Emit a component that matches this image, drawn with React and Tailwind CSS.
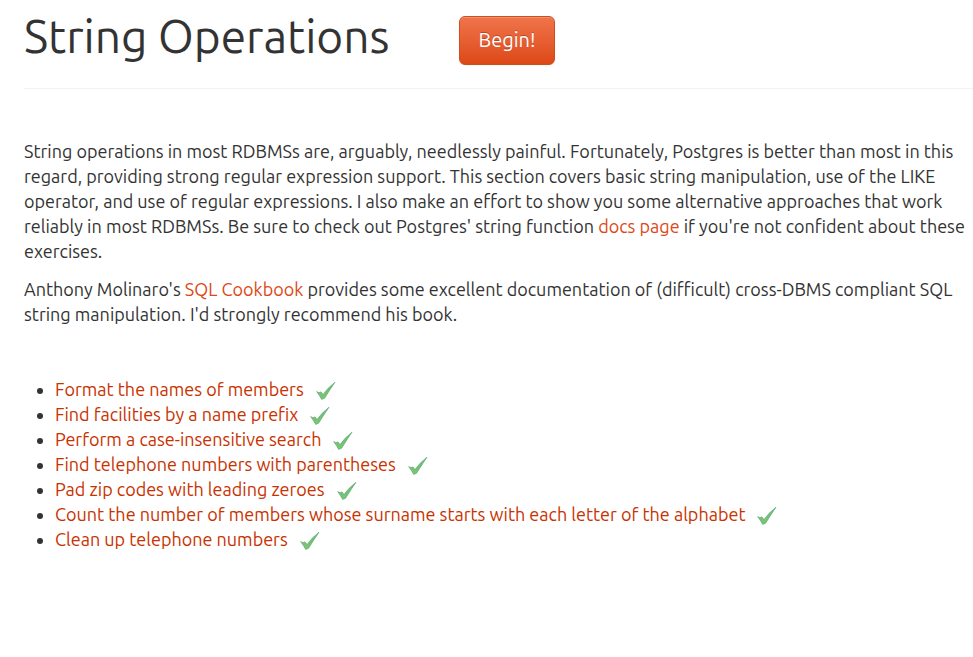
const exercises = [
  'Format the names of members',
  'Find facilities by a name prefix',
  'Perform a case-insensitive search',
  'Find telephone numbers with parentheses',
  'Pad zip codes with leading zeroes',
  'Count the number of members whose surname starts with each letter of the alphabet',
  'Clean up telephone numbers',
];

function Tick() {
  return (
    <svg className="mt-1 ml-3 h-5 w-5 shrink-0" viewBox="0 0 20 20" role="img" aria-label="Completed">
      <defs>
        <linearGradient id="tick-fill" x1="0" y1="0" x2="0" y2="1">
          <stop offset="0" stopColor="#66bd6c" />
          <stop offset="1" stopColor="#7cc873" />
        </linearGradient>
      </defs>
      <path
        d="M0.7 10.6 L3 11.7 L5 10.9 L7 13.5 L12.2 7.2 L19 1.2 L14.6 7.8 L8.6 17.2 L5.7 18.4 L3.4 14.6 Z"
        fill="url(#tick-fill)"
        stroke="#559d72"
        strokeWidth="0.6"
        strokeLinejoin="round"
      />
    </svg>
  );
}

export default function App() {
  return (
    <main className="bg-white pl-6 font-['Ubuntu','Noto_Sans',sans-serif] text-[18px] leading-[25px] text-[#333]">
      <header className="flex h-[89px] items-start border-b border-[#f2f2f2]">
        <h1 className="mr-[70px] pt-2 text-[46px] leading-[56px] whitespace-nowrap">String Operations</h1>
        <button
          type="button"
          className="mt-4 h-[49px] rounded-md border border-[#c9501f] bg-linear-to-b from-[#f0744a] to-[#dd4814] px-[18px] pb-[2px] text-[20px] text-white shadow-[inset_0_1px_0_rgba(255,255,255,0.2),0_1px_2px_rgba(0,0,0,0.05)] text-shadow-[0_-1px_0_rgba(0,0,0,0.25)]"
        >
          Begin!
        </button>
      </header>
      <section className="mt-[50px] flex flex-col gap-[13px] pr-1">
        <p>
          String operations in most RDBMSs are, arguably, needlessly painful. Fortunately, Postgres is better than
          most in this regard, providing strong regular expression support. This section covers basic string
          manipulation, use of the LIKE operator, and use of regular expressions. I also make an effort to show you
          some alternative approaches that work reliably in most RDBMSs. Be sure to check out Postgres' string
          function <a href="#docs" className="text-[#dd4814]">docs page</a> if you're not confident about these
          exercises.
        </p>
        <p>
          Anthony Molinaro's <a href="#cookbook" className="text-[#dd4814]">SQL Cookbook</a> provides some excellent
          documentation of (difficult) cross-DBMS compliant SQL string manipulation. I'd strongly recommend his book.
        </p>
      </section>
      <ul className="mt-[50px] ml-[31px] list-disc">
        {exercises.map((name) => (
          <li key={name}>
            <div className="flex items-start">
              <a href="#exercise" className="text-[#c83200]">{name}</a>
              <Tick />
            </div>
          </li>
        ))}
      </ul>
    </main>
  );
}
